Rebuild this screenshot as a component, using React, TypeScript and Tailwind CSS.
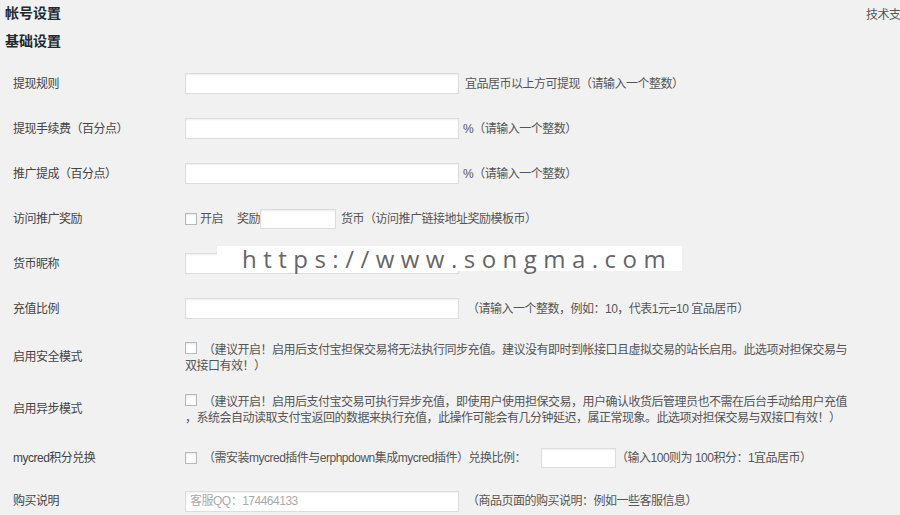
const font = "font-['Liberation_Sans','Noto_Sans_CJK_SC',sans-serif]";

function TextInput({ w = "w-[274px]", h = "h-[21px]", value }: { w?: string; h?: string; value?: string }) {
  return (
    <div
      className={`${w} ${h} shrink-0 border border-[#dddddd] bg-white shadow-[inset_0_1px_2px_rgba(0,0,0,0.07)] px-[4px] text-[12px] leading-[19px] text-[#aaaaaa]`}
    >
      {value}
    </div>
  );
}

function Check() {
  return (
    <span className="inline-block w-[12px] h-[12px] shrink-0 border border-[#b4b9be] bg-white shadow-[inset_0_1px_2px_rgba(0,0,0,0.1)]" />
  );
}

function Row({ label, h = "h-[45px]", children }: { label: string; h?: string; children: React.ReactNode }) {
  return (
    <div className={`flex items-center ${h}`}>
      <div className="w-[185px] shrink-0 pl-[13px] text-[#444444]">{label}</div>
      <div className="flex items-center min-w-0 flex-1">{children}</div>
    </div>
  );
}

export default function App() {
  return (
    <div className={`relative w-[900px] h-[515px] overflow-hidden bg-[#f1f1f1] text-[12px] leading-[16px] tracking-[-0.5px] text-[#555555] ${font}`}>
      <div className="flex justify-between h-[26px] items-center">
        <div className="pl-[5px] text-[14px] font-bold text-[#23282d] tracking-normal">帐号设置</div>
        <div className="w-[34px] overflow-hidden whitespace-nowrap text-[#555555] pt-[4px]">技术支</div>
      </div>
      <div className="h-[30px] flex items-center pl-[5px] text-[14px] font-bold text-[#23282d] tracking-normal">基础设置</div>
      <div className="h-[5px]" />

      <Row label="提现规则">
        <TextInput />
        <span className="ml-[6px]">宜品居币以上方可提现（请输入一个整数）</span>
      </Row>
      <Row label="提现手续费（百分点）">
        <TextInput />
        <span className="ml-[4px]">%（请输入一个整数）</span>
      </Row>
      <Row label="推广提成（百分点）">
        <TextInput />
        <span className="ml-[4px]">%（请输入一个整数）</span>
      </Row>
      <Row label="访问推广奖励">
        <Check />
        <span className="ml-[3px]">开启</span>
        <span className="ml-[14px]">奖励</span>
        <TextInput w="w-[76px]" h="h-[20px]" />
        <span className="ml-[5px]">货币（访问推广链接地址奖励模板币）</span>
      </Row>
      <Row label="货币昵称">
        <TextInput />
      </Row>
      <Row label="充值比例">
        <TextInput />
        <span className="ml-[8px]">（请输入一个整数，例如：10，代表1元=10 宜品居币）</span>
      </Row>
      <Row label="启用安全模式" h="h-[52px]">
        <div className="pt-[2px]">
          <Check />
          <span className="ml-[6px]">（建议开启！启用后支付宝担保交易将无法执行同步充值。建议没有即时到帐接口且虚拟交易的站长启用。此选项对担保交易与</span>
          <br />
          <span>双接口有效！）</span>
        </div>
      </Row>
      <Row label="启用异步模式" h="h-[52px]">
        <div className="pt-[2px]">
          <Check />
          <span className="ml-[6px]">（建议开启！启用后支付宝交易可执行异步充值，即使用户使用担保交易，用户确认收货后管理员也不需在后台手动给用户充值</span>
          <br />
          <span>，系统会自动读取支付宝返回的数据来执行充值，此操作可能会有几分钟延迟，属正常现象。此选项对担保交易与双接口有效！）</span>
        </div>
      </Row>
      <Row label="mycred积分兑换" h="h-[46px]">
        <Check />
        <span className="ml-[6px]">（需安装mycred插件与erphpdown集成mycred插件）兑换比例：</span>
        <span className="ml-[15px]">
          <TextInput w="w-[75px]" h="h-[20px]" />
        </span>
        <span>（输入100则为 100积分：1宜品居币）</span>
      </Row>
      <Row label="购买说明" h="h-[40px]">
        <TextInput h="h-[21px]" value="客服QQ：174464133" />
        <span className="ml-[8px]">（商品页面的购买说明：例如一些客服信息）</span>
      </Row>

      <div className="absolute left-[217px] top-[246px] w-[465px] h-[25px] bg-white pl-[25px] font-['Open_Sans',sans-serif] text-[24px] leading-[25px] tracking-[0.27em] text-[#666666] whitespace-nowrap">
        https://www.songma.com
      </div>
    </div>
  );
}
